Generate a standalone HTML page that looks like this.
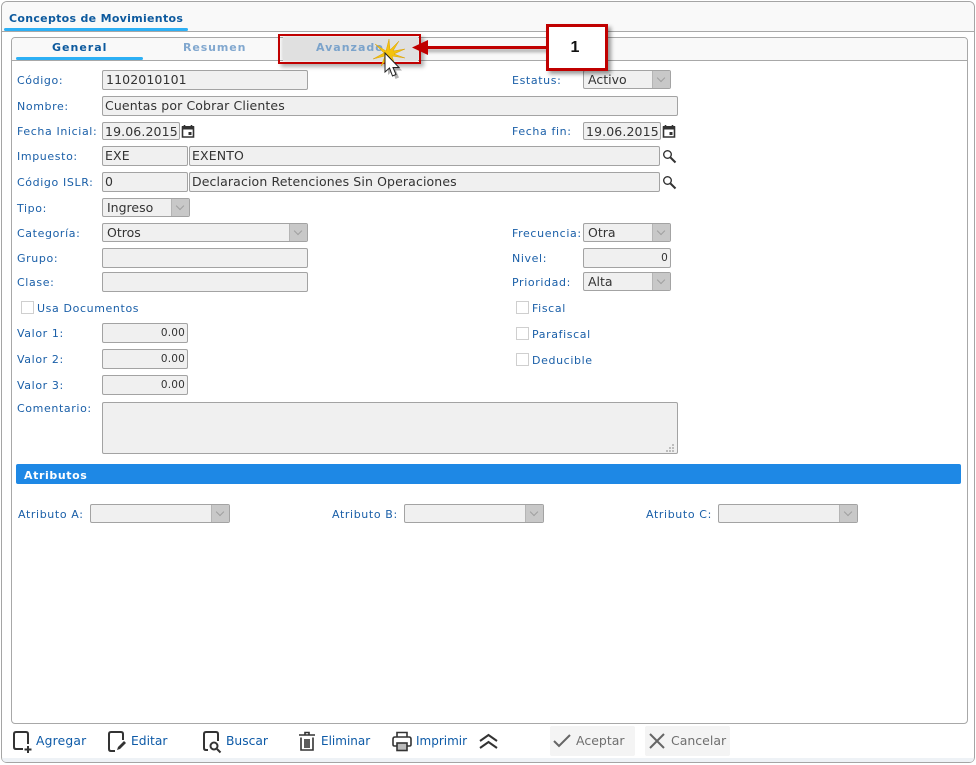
<!DOCTYPE html>
<html><head><meta charset="utf-8"><style>
html,body{margin:0;padding:0;background:#fff}
body{width:976px;height:765px;position:relative;overflow:hidden;font-family:"DejaVu Sans","Liberation Sans",sans-serif}
div,span{position:absolute;box-sizing:border-box;white-space:nowrap}
svg{position:absolute;overflow:visible}
.l{font-size:11px;color:#1a5fa8;line-height:14px;letter-spacing:.62px;margin-top:1px}
.i{background:#f0f0f0;border:1px solid #a3a3a3;border-radius:2px;font-size:12.5px;color:#333;line-height:17px;padding-left:2px;letter-spacing:.12px}
.s{background:#f0f0f0;border:1px solid #a3a3a3;border-radius:2px;font-size:12.5px;color:#333;line-height:18px;padding-left:4px}
.s b{position:absolute;right:0;top:0;bottom:0;width:17px;background:#c8c8c8;border-left:1px solid #b5b5b5}
.s b:after{content:"";position:absolute;left:5px;top:4px;width:5px;height:5px;border-right:1px solid #a0a0a0;border-bottom:1px solid #a0a0a0;transform:rotate(45deg)}
.i.r{text-align:right;padding:0 2px 0 0;font-size:10.5px;line-height:19px;letter-spacing:.2px}
.c{width:13px;height:13px;background:#fff;border:1px solid #cfcfcf}
.t{font-size:11px;font-weight:bold;letter-spacing:1px;line-height:14px}
.b{font-size:12.3px;color:#0d5aa7;line-height:16px}
.g{font-size:12.5px;color:#6f6f6f;line-height:16px}
</style></head><body>
<div style="left:1px;top:1px;width:974px;height:762px;border:1px solid #a5a5a5;border-radius:6px;background:#fff"></div>
<div style="left:2px;top:2px;width:972px;height:29px;background:#f9f9f9;border-radius:5px 5px 0 0"></div>
<div style="left:2px;top:31px;width:972px;height:1px;background:#a8a8a8"></div>
<div style="left:2px;top:758px;width:972px;height:4px;background:#eef2f6;border-radius:0 0 5px 5px"></div>
<div style="left:9px;top:12px;font-size:11px;font-weight:bold;color:#0d5a9e;line-height:14px;letter-spacing:.3px">Conceptos de Movimientos</div>
<div style="left:4px;top:28px;width:184px;height:3px;background:#2db0f5;border-radius:2px"></div>

<div style="left:11px;top:37px;width:957px;height:687px;border:1px solid #a8a8a8;border-radius:4px;background:#fff"></div>
<div style="left:12px;top:38px;width:955px;height:22px;background:#f9f9f9;border-radius:3px 3px 0 0"></div>
<div style="left:12px;top:60px;width:955px;height:1px;background:#a8a8a8"></div>
<div style="left:16px;top:57px;width:127px;height:3px;background:#2db0f5;border-radius:2px"></div>
<div class="t" style="left:52px;top:41px;color:#0d5a9e">General</div>
<div class="t" style="left:183px;top:41px;color:#82a8cf;letter-spacing:.9px">Resumen</div>

<div class="l" style="left:17px;top:73px">Código:</div>
<div class="i" style="left:102px;top:70px;width:206px;height:20px;padding-left:3px">1102010101</div>
<div class="l" style="left:17px;top:99px">Nombre:</div>
<div class="i" style="left:102px;top:96px;width:576px;height:20px">Cuentas por Cobrar Clientes</div>
<div class="l" style="left:17px;top:124px">Fecha Inicial:</div>
<div class="i" style="left:102px;top:122px;width:78px;height:18px">19.06.2015</div>
<svg style="left:181px;top:124px" width="14" height="14" viewBox="0 0 14 14"><path d="M1.5 3h11v10h-11zM3.5 1v2M10.5 1v2" fill="none" stroke="#333" stroke-width="1.6"/><rect x="1" y="2" width="12" height="3.5" fill="#333"/><rect x="7.5" y="8" width="3" height="3" fill="#333"/></svg>
<div class="l" style="left:17px;top:149px">Impuesto:</div>
<div class="i" style="left:102px;top:146px;width:86px;height:20px">EXE</div>
<div class="i" style="left:189px;top:146px;width:471px;height:20px">EXENTO</div>
<svg style="left:662px;top:149px" width="15" height="15" viewBox="0 0 15 15"><circle cx="5.5" cy="5.5" r="3.8" fill="none" stroke="#333" stroke-width="1.4"/><path d="M8.5 8.5l5 5" stroke="#333" stroke-width="2"/></svg>
<div class="l" style="left:17px;top:175px">Código ISLR:</div>
<div class="i" style="left:102px;top:172px;width:86px;height:20px">0</div>
<div class="i" style="left:189px;top:172px;width:471px;height:20px">Declaracion Retenciones Sin Operaciones</div>
<svg style="left:662px;top:175px" width="15" height="15" viewBox="0 0 15 15"><circle cx="5.5" cy="5.5" r="3.8" fill="none" stroke="#333" stroke-width="1.4"/><path d="M8.5 8.5l5 5" stroke="#333" stroke-width="2"/></svg>
<div class="l" style="left:17px;top:201px">Tipo:</div>
<div class="s" style="left:102px;top:198px;width:88px;height:19px">Ingreso<b></b></div>
<div class="l" style="left:17px;top:226px">Categoría:</div>
<div class="s" style="left:102px;top:223px;width:206px;height:19px">Otros<b></b></div>
<div class="l" style="left:17px;top:251px">Grupo:</div>
<div class="i" style="left:102px;top:248px;width:206px;height:20px"></div>
<div class="l" style="left:17px;top:275px">Clase:</div>
<div class="i" style="left:102px;top:272px;width:206px;height:20px"></div>
<div class="c" style="left:21px;top:301px"></div>
<div class="l" style="left:37px;top:301px">Usa Documentos</div>
<div class="l" style="left:17px;top:326px">Valor 1:</div>
<div class="i r" style="left:102px;top:323px;width:86px;height:20px">0.00</div>
<div class="l" style="left:17px;top:352px">Valor 2:</div>
<div class="i r" style="left:102px;top:349px;width:86px;height:20px">0.00</div>
<div class="l" style="left:17px;top:378px">Valor 3:</div>
<div class="i r" style="left:102px;top:375px;width:86px;height:20px">0.00</div>
<div class="l" style="left:17px;top:401px">Comentario:</div>
<div class="i" style="left:102px;top:402px;width:576px;height:52px"></div>
<svg style="left:666px;top:443px" width="10" height="10"><path d="M6 1h2v2H6zM3 4h2v2H3zM6 4h2v2H6zM0 7h2v2H0zM3 7h2v2H3zM6 7h2v2H6z" fill="#bdbdbd"/></svg>

<div class="l" style="left:512px;top:73px">Estatus:</div>
<div class="s" style="left:583px;top:70px;width:88px;height:19px">Activo<b></b></div>
<div class="l" style="left:512px;top:124px">Fecha fin:</div>
<div class="i" style="left:583px;top:122px;width:78px;height:18px">19.06.2015</div>
<svg style="left:662px;top:124px" width="14" height="14" viewBox="0 0 14 14"><path d="M1.5 3h11v10h-11zM3.5 1v2M10.5 1v2" fill="none" stroke="#333" stroke-width="1.6"/><rect x="1" y="2" width="12" height="3.5" fill="#333"/><rect x="7.5" y="8" width="3" height="3" fill="#333"/></svg>
<div class="l" style="left:512px;top:226px">Frecuencia:</div>
<div class="s" style="left:583px;top:223px;width:88px;height:19px">Otra<b></b></div>
<div class="l" style="left:512px;top:251px">Nivel:</div>
<div class="i r" style="left:583px;top:248px;width:88px;height:20px">0</div>
<div class="l" style="left:512px;top:275px">Prioridad:</div>
<div class="s" style="left:583px;top:272px;width:88px;height:19px">Alta<b></b></div>
<div class="c" style="left:516px;top:301px"></div>
<div class="l" style="left:532px;top:301px">Fiscal</div>
<div class="c" style="left:516px;top:327px"></div>
<div class="l" style="left:532px;top:327px">Parafiscal</div>
<div class="c" style="left:516px;top:353px"></div>
<div class="l" style="left:532px;top:353px">Deducible</div>

<div style="left:16px;top:464px;width:945px;height:20px;background:#1e88e5;border-radius:2px"></div>
<div class="t" style="left:24px;top:469px;color:#fff;letter-spacing:.6px">Atributos</div>
<div class="l" style="left:18px;top:507px">Atributo A:</div>
<div class="s" style="left:90px;top:504px;width:140px;height:19px"><b></b></div>
<div class="l" style="left:332px;top:507px">Atributo B:</div>
<div class="s" style="left:404px;top:504px;width:140px;height:19px"><b></b></div>
<div class="l" style="left:646px;top:507px">Atributo C:</div>
<div class="s" style="left:718px;top:504px;width:140px;height:19px"><b></b></div>

<svg style="left:13px;top:731px" width="20" height="23" viewBox="0 0 20 23"><path d="M10 18H3q-2 0-2-2V3q0-2 2-2h10q2 0 2 2v10" fill="none" stroke="#333" stroke-width="2"/><path d="M15 15v7M11.500 18.500h7" stroke="#333" stroke-width="2"/></svg>
<div class="b" style="left:36px;top:733px;letter-spacing:.2px">Agregar</div>
<svg style="left:108px;top:731px" width="20" height="22" viewBox="0 0 20 22"><path d="M7 20H3q-2 0-2-2V3q0-2 2-2h10q2 0 2 2v6" fill="none" stroke="#333" stroke-width="2"/><path d="M9 19l1-3 6-6 2 2-6 6z" fill="#333"/></svg>
<div class="b" style="left:131px;top:733px">Editar</div>
<svg style="left:203px;top:731px" width="20" height="23" viewBox="0 0 20 23"><path d="M5 19H3q-2 0-2-2V3q0-2 2-2h10q2 0 2 2v7" fill="none" stroke="#333" stroke-width="2"/><circle cx="11" cy="15" r="3.500" fill="none" stroke="#333" stroke-width="2"/><path d="M14 18l3.500 3.500" stroke="#333" stroke-width="2"/></svg>
<div class="b" style="left:226px;top:733px">Buscar</div>
<svg style="left:298px;top:731px" width="19" height="21" viewBox="0 0 19 21"><path d="M1 4h16M7 4V1.500h4V4M3 6.500V19h12V6.500M7 8v9M9 8v9M11 8v9" fill="none" stroke="#333" stroke-width="1.600"/></svg>
<div class="b" style="left:321px;top:733px;font-size:12px">Eliminar</div>
<svg style="left:392px;top:731px" width="20" height="21" viewBox="0 0 20 21"><path d="M5 6V1.500h10V6M5 15H2.500Q1 15 1 13.500V8q0-2 2-2h14q2 0 2 2v5.500q0 1.500-1.500 1.500H15" fill="none" stroke="#333" stroke-width="1.600"/><rect x="5" y="12" width="10" height="7.500" fill="#bbb" stroke="#333" stroke-width="1.600"/></svg>
<div class="b" style="left:416px;top:733px;font-size:12px">Imprimir</div>
<svg style="left:478px;top:733px" width="21" height="16" viewBox="0 0 21 16"><path d="M2 8l8.500-6L19 8M2 15l8.500-6 8.500 6" fill="none" stroke="#333" stroke-width="2"/></svg>
<div style="left:550px;top:726px;width:85px;height:30px;background:#f4f4f4;border-radius:2px"></div>
<svg style="left:553px;top:733px" width="18" height="15" viewBox="0 0 18 15"><path d="M1 8l5 5L17 2" fill="none" stroke="#666" stroke-width="2"/></svg>
<div class="g" style="left:576px;top:733px">Aceptar</div>
<div style="left:645px;top:726px;width:85px;height:30px;background:#f4f4f4;border-radius:2px"></div>
<svg style="left:649px;top:733px" width="16" height="16" viewBox="0 0 16 16"><path d="M1 1l14 14M15 1L1 15" stroke="#666" stroke-width="2"/></svg>
<div class="g" style="left:671px;top:733px">Cancelar</div>

<div style="left:283px;top:37px;width:135px;height:24px;background:#e0e0e0;box-shadow:0 0 4px rgba(0,0,0,.2)"></div>
<div class="t" style="left:316px;top:41px;color:#7ba3cb">Avanzado</div>
<div style="left:278px;top:34px;width:143px;height:30px;border:2px solid #c00000;box-shadow:3px 3px 4px rgba(0,0,0,.3)"></div>
<div style="left:420px;top:46px;width:128px;height:3px;background:#c00000;box-shadow:2px 3px 3px rgba(0,0,0,.35)"></div>
<svg style="left:412px;top:40px" width="16" height="15"><path d="M0 7.500L16 0V15z" fill="#c00000"/></svg>
<div style="left:546px;top:24px;width:62px;height:47px;background:#fff;border:3px solid #c00000;box-shadow:3px 3px 4px rgba(0,0,0,.4);font:bold 16px/41px 'Liberation Sans',sans-serif;color:#111;text-align:center;padding-right:4px">1</div>
<svg style="left:372px;top:38px" width="34" height="32" viewBox="0 0 34 32"><path d="M17 1L18 12 27 3 21 13 33 11 22 16 33 20 20 18 24 30 17 19 9 28 13 18 1 21 12 15 3 6 14 13z" fill="#f4c20d" stroke="#dba000" stroke-width=".5"/></svg>
<svg style="left:384px;top:52px" width="20" height="28" viewBox="0 0 20 28"><path d="M1 1V20L5.500 16 8.500 24 12 22.500 9 15.500H15z" fill="rgba(0,0,0,.3)" transform="translate(3,3)"/><path d="M1 1V20L5.500 16 8.500 24 12 22.500 9 15.500H15z" fill="#fff" stroke="#222" stroke-width="1"/></svg>
</body></html>
